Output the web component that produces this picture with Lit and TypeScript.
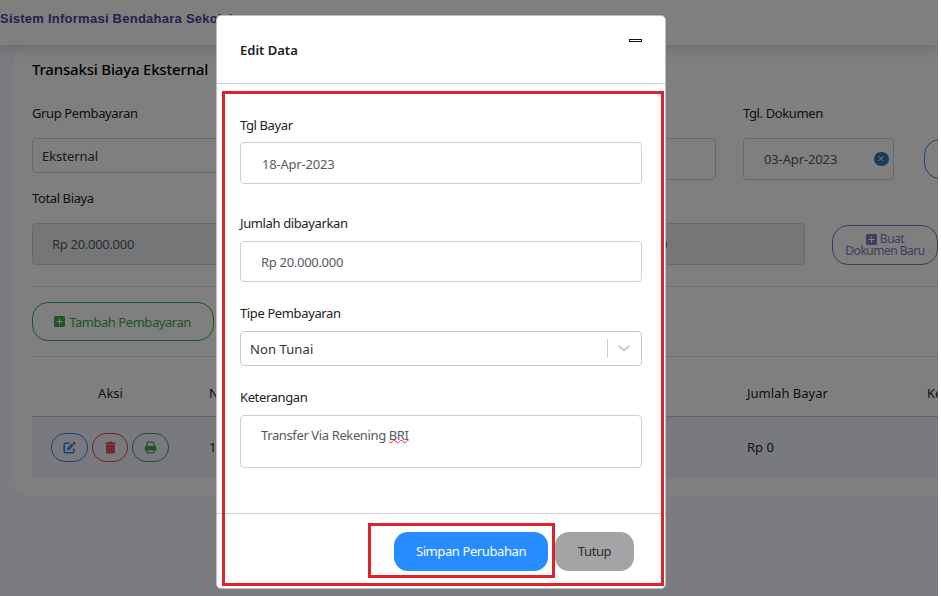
import { LitElement, html, css, svg } from "lit";
import { customElement } from "lit/decorators.js";

const plusSquare = html`<svg class="plus" viewBox="0 0 11 11" width="11" height="11">
  <rect width="11" height="11" rx="1.5" fill="currentColor" />
  <path d="M5.5 2.5v6M2.5 5.5h6" class="cut" fill="none" />
</svg>`;

const icons = {
  edit: svg`<path d="M6.500 2.200H2.500Q1.200 2.200 1.200 3.500v7Q1.200 11.800 2.500 11.800h7q1.300 0 1.300-1.300V7.500" fill="none" stroke="currentColor" stroke-width="1.500"/><path d="M4.300 7 8.700 2.500l2 2-4.500 4.600-2.400.5zM9.300 1.900l1-1q.6-.6 1.200 0l.8.8q.6.6 0 1.200l-1 1z" fill="currentColor"/>`,
  trash: svg`<path d="M1.500 1.500h3L5.200.600h2.600l.7.9h3v1.400h-10zM2.200 3.500h8.600v8q0 1-1 1H3.200q-1 0-1-1z" fill="currentColor"/><path d="M4.500 5.200v5.800M6.500 5.200v5.800M8.500 5.200v5.800" stroke="#f1f4ff" stroke-opacity=".3" stroke-width=".7"/>`,
  print: svg`<path d="M3.200 5.200V1.200h5.600l1.200 1.200v2.800" fill="none" stroke="currentColor" stroke-width="1.300"/><path d="M2.200 5h8.800q1.400 0 1.400 1.400v3.300H.8V6.400Q.8 5 2.200 5z" fill="currentColor"/><path d="M3.300 8.500h6.400v3.300H3.300z" fill="#f1f4ff" stroke="currentColor" stroke-width="1.300"/>`,
};

@customElement("app-root")
export class AppRoot extends LitElement {
  static styles = css`
    :host {
      display: block;
      position: relative;
      width: 941px;
      height: 596px;
      overflow: hidden;
      background: #fff;
      font: 13px/18px "Noto Sans", "Open Sans", sans-serif;
      letter-spacing: -0.38px;
      color: #212529;
    }
    * { box-sizing: border-box; }
    .page {
      position: relative;
      width: 938px;
      height: 596px;
      overflow: hidden;
      background: #f6f8ff;
    }
    .top {
      position: relative;
      height: 45px;
      padding: 10px 0 0;
      background: #fff;
      box-shadow: 0 2px 14px rgba(60, 70, 110, 0.25);
      color: #4a42a0;
      font: bold 13px/18px "Liberation Sans", sans-serif;
      letter-spacing: 0.25px;
      white-space: nowrap;
      z-index: 1;
    }
    .card {
      width: 1000px;
      height: 451px;
      margin-left: 14px;
      padding: 14px 0 0 18px;
      background: #fff;
      border-radius: 16px;
    }
    .title {
      font-size: 15px;
      font-weight: 500;
      line-height: 20px;
      letter-spacing: -0.19px;
      color: #000;
    }
    .row { display: flex; align-items: flex-start; }
    .row > * { flex: none; }
    .fields1 { margin-top: 25px; height: 85px; gap: 27px; }
    .fields2 { height: 97px; gap: 27px; }
    .col { display: flex; flex-direction: column; }
    .label { height: 18px; }
    .c1 { width: 328px; }
    .c2 { width: 329px; }
    .c3 { width: 151px; }
    .w { width: 240px; }
    .w.mid { width: 239px; }
    .box {
      display: flex;
      align-items: center;
      height: 42px;
      margin-top: 16px;
      border: 1px solid #ccd0d4;
      border-radius: 4px;
      padding: 0 20px;
      color: #555b62;
    }
    .short { height: 35px; padding: 0 9px; color: #333; letter-spacing: -0.05px; }
    .filled { background: #e9ecef; padding-left: 19px; letter-spacing: -0.3px; }
    .date { padding: 0 4px 0 20px; justify-content: space-between; letter-spacing: -0.13px; }
    .clear { width: 15px; height: 14px; color: #2c78b4; }
    .pill {
      display: flex;
      align-items: center;
      justify-content: center;
      border: 1px solid currentColor;
      border-radius: 16px;
    }
    .more { width: 106px; height: 40px; margin-top: 35px; margin-left: 3px; color: #4a86e8; }
    .new {
      width: 106px;
      height: 40px;
      margin-top: 36px;
      flex-direction: column;
      font-size: 12px;
      line-height: 12px;
      letter-spacing: -0.5px;
      color: #8279bd;
    }
    .new .line { display: flex; gap: 3px; align-items: center; }
    .plus { flex: none; }
    .cut { stroke: #fff; stroke-width: 1.1; }
    .rule { height: 1px; background: #dcdfe3; }
    .add {
      width: 182px;
      height: 39px;
      margin: 15px 0;
      padding-right: 1px;
      color: #43a84a;
      letter-spacing: -0.45px;
      gap: 4px;
    }
    .thead { display: flex; height: 59px; align-items: center; padding-top: 14px; letter-spacing: 0; }
    .tbody { display: flex; height: 62px; align-items: center; background: #f1f4ff; border-top: 1px solid #c8c9d8; letter-spacing: 0; }
    .thead > *, .tbody > * { flex: none; }
    .thead > div, .no, .jumlah { padding-bottom: 2px; }
    .aksi { width: 157px; }
    .thead .aksi { text-align: center; }
    .actions { display: flex; gap: 4px; padding-left: 19px; }
    .no { width: 538px; padding-left: 20px; }
    .jumlah { width: 200px; padding-left: 20px; }
    .act { width: 37px; height: 29px; border-radius: 14px; }
    .blue { color: #2f86e0; }
    .red { width: 36px; color: #ee3f4a; }
    .green { color: #43a84a; }
    .shade {
      position: absolute;
      inset: 0;
      z-index: 2;
      background: rgba(0, 0, 0, 0.5);
    }
    .modal {
      position: absolute;
      left: 216px;
      top: 15px;
      z-index: 3;
      width: 450px;
      height: 574px;
      display: flex;
      flex-direction: column;
      background: #fff;
      border: 1px solid #b9bec4;
      border-radius: 5px;
    }
    .mhead {
      display: flex;
      justify-content: space-between;
      height: 68px;
      padding: 25px 23px 0;
      border-bottom: 1px solid #c9d3d5;
    }
    .mtitle { font-weight: 600; letter-spacing: 0; color: #1c1c1c; }
    .dash { width: 13px; height: 3px; border: 1px solid #111; margin-top: -2px; background: #fff; }
    .mbody { height: 429px; padding: 32px 23px 0; color: #1f2124; }
    .mbody .box { margin-top: 8px; }
    .g1 { height: 98px; }
    .g1 .box { padding: 2px 0 0 21px; letter-spacing: -0.2px; }
    .g2 { height: 90px; }
    .g2 .box { height: 41px; padding-top: 1px; letter-spacing: -0.3px; }
    .g3 { height: 84px; }
    .mbody .g2 .box { margin-top: 9px; }
    .mbody .g3 .box { height: 35px; margin-top: 9px; padding: 0 0 0 9px; color: #333; border-color: #c4c8ca; letter-spacing: 0.1px; }
    .mbody .g4 .box { height: 53px; margin-top: 9px; align-items: flex-start; padding-top: 10px; }
    .select { justify-content: space-between; }
    .ind { display: flex; align-items: center; height: 19px; width: 34px; padding-left: 10px; border-left: 1px solid #ccc; }
    .spell { text-decoration: underline wavy #d2323a 1px; text-underline-offset: -1px; text-decoration-skip-ink: none; }
    .mfoot {
      display: flex;
      flex: 1;
      justify-content: flex-end;
      gap: 7px;
      padding: 18px 31px 0 0;
      border-top: 1px solid #cdd0d2;
    }
    .btn {
      height: 39px;
      display: flex;
      align-items: center;
      justify-content: center;
      border-radius: 14px;
      padding-bottom: 1px;
      letter-spacing: -0.4px;
    }
    .save { width: 154px; background: #278cff; color: #fff; }
    .close { width: 79px; background: #a3a4a6; color: #2a2d30; }
    .mark { position: absolute; z-index: 4; border: 3px solid #dc232c; }
    .mark-form { left: 222px; top: 91px; width: 442px; height: 495px; }
    .mark-save { left: 368px; top: 523px; width: 187px; height: 55px; }
  `;

  private action(color: string, icon: unknown) {
    return html`<div class="pill act ${color}"><svg width="13" height="13" viewBox="0 0 13 13">${icon}</svg></div>`;
  }

  render() {
    return html`
      <div class="page">
        <div class="top">Sistem Informasi Bendahara Sekolah</div>
        <div class="card">
          <div class="title">Transaksi Biaya Eksternal</div>
          <div class="row fields1">
            <div class="col c1"><div class="label">Grup Pembayaran</div><div class="box short">Eksternal</div></div>
            <div class="col c2"><div class="label"></div><div class="box"></div></div>
            <div class="col c3">
              <div class="label">Tgl. Dokumen</div>
              <div class="box date"><span>03-Apr-2023</span>
                <svg class="clear" viewBox="0 0 15 14"><rect width="15" height="14" rx="7" fill="currentColor" /><path d="M4.500 4l5 5M9.500 4l-5 5" stroke="#fff" stroke-width="1" /></svg>
              </div>
            </div>
            <div class="pill more"></div>
          </div>
          <div class="row fields2">
            <div class="col w"><div class="label">Total Biaya</div><div class="box filled">Rp 20.000.000</div></div>
            <div class="col w mid"><div class="label"></div><div class="box filled"></div></div>
            <div class="col w"><div class="label"></div><div class="box filled">Rp 20.000.000</div></div>
            <div class="pill new"><span class="line">${plusSquare}<span>Buat</span></span><span>Dokumen Baru</span></div>
          </div>
          <div class="rule"></div>
          <div class="pill add">${plusSquare}<span>Tambah Pembayaran</span></div>
          <div class="rule"></div>
          <div class="thead"><div class="aksi">Aksi</div><div class="no">No</div><div class="jumlah">Jumlah Bayar</div><div>Keterangan</div></div>
          <div class="tbody">
            <div class="aksi actions">
              ${this.action("blue", icons.edit)}${this.action("red", icons.trash)}${this.action("green", icons.print)}
            </div>
            <div class="no">1</div><div class="jumlah">Rp 0</div>
          </div>
        </div>
        <div class="shade"></div>
      </div>
      <div class="modal">
        <div class="mhead"><div class="mtitle">Edit Data</div><div class="dash"></div></div>
        <div class="mbody">
          <div class="g1"><div class="label">Tgl Bayar</div><div class="box">18-Apr-2023</div></div>
          <div class="g2"><div class="label">Jumlah dibayarkan</div><div class="box">Rp 20.000.000</div></div>
          <div class="g3">
            <div class="label">Tipe Pembayaran</div>
            <div class="box select"><span>Non Tunai</span>
              <span class="ind"><svg width="12" height="7" viewBox="0 0 12 7"><path d="M1 .8l5 4.700 5-4.700" fill="none" stroke="#c6c8ca" stroke-width="1.900" /></svg></span>
            </div>
          </div>
          <div class="g4"><div class="label">Keterangan</div><div class="box"><span>Transfer Via Rekening <span class="spell">BRI</span></span></div></div>
        </div>
        <div class="mfoot"><div class="btn save">Simpan Perubahan</div><div class="btn close">Tutup</div></div>
      </div>
      <div class="mark mark-form"></div>
      <div class="mark mark-save"></div>
    `;
  }
}
